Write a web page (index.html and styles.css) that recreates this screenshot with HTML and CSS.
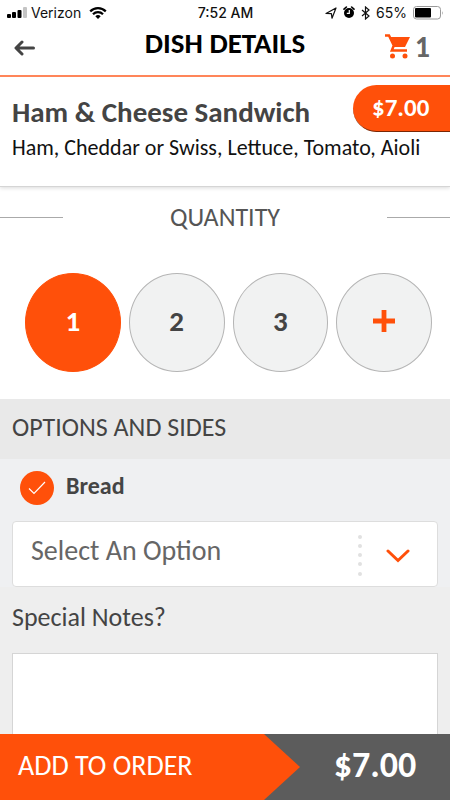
FILE: index.html
```html
<!DOCTYPE html>
<html lang="en">
<head>
<meta charset="utf-8">
<meta name="viewport" content="width=device-width, initial-scale=1">
<title>Dish Details</title>
<link rel="stylesheet" href="styles.css">
</head>
<body>
<div class="app">
  <div class="status">
    <div class="status-side">
      <svg width="20" height="12" viewBox="0 0 20 12"><rect x="0" y="7" width="4" height="4" rx="1"/><rect x="5" y="5" width="4" height="6" rx="1"/><rect x="10.500" y="3" width="4" height="8" rx="1"/><rect x="16" y="0" width="4" height="11" rx="1" fill="#c4c4c4"/></svg>
      <span>Verizon</span>
      <svg class="wifi" width="18" height="12" viewBox="0 0 18 12"><path d="M1.200 4.400a11 11 0 0 1 15.600 0M4 7.300a7 7 0 0 1 10 0" fill="none" stroke="#000" stroke-width="2.200"/><path d="M9 12L6.300 9.300a3.800 3.800 0 0 1 5.400 0z"/></svg>
    </div>
    <span class="clock">7:52 AM</span>
    <div class="status-side status-right">
      <svg width="12" height="12" viewBox="0 0 12 12"><path d="M1 6.500L11 1 7 11.200 6.400 6.700z" fill="none" stroke="#111" stroke-width="1.200" stroke-linejoin="round"/></svg>
      <svg width="12" height="13" viewBox="0 0 12 13"><circle cx="6" cy="7" r="5"/><path d="M1 3.200L3.400 1M11 3.200L8.600 1" stroke="#000" stroke-width="1.600" stroke-linecap="round"/><path d="M6.300 4v3.400H3.800" fill="none" stroke="#fff" stroke-width="1.200"/></svg>
      <svg width="9" height="14" viewBox="0 0 9 14"><path d="M1 4l7 6-3.500 3V1L8 4l-7 6" fill="none" stroke="#111" stroke-width="1.200"/></svg>
      <span>65%</span>
      <svg width="31" height="14" viewBox="0 0 31 14"><rect x=".5" y=".5" width="27" height="12.500" rx="3" fill="#fff" stroke="#999"/><rect x="2" y="2" width="16" height="9.500" rx="1"/><path d="M29.300 5v4q1.400-2 0-4z" fill="#888"/></svg>
    </div>
  </div>
  <header class="header">
    <button class="back" type="button" aria-label="Back"><svg width="21" height="16" viewBox="0 0 21 16"><path d="M8 2L2 8l6 6M2.500 8H19.500" fill="none" stroke="#444" stroke-width="3" stroke-linecap="round" stroke-linejoin="round"/></svg></button>
    <h1>DISH DETAILS</h1>
    <a class="cart" href="#" aria-label="Cart, 1 item"><svg width="26" height="26" viewBox="0 0 26 26"><path d="M0 1.500h4l4.800 10-2 5H22" fill="none" stroke="#ff500a" stroke-width="2.500"/><path d="M4.500 3H25L20 13H9z" fill="#ff500a"/><circle cx="7.500" cy="22" r="2.500" fill="#ff500a"/><circle cx="20" cy="22" r="2.500" fill="#ff500a"/></svg><span>1</span></a>
  </header>
  <main class="content">
    <section class="dish">
      <div class="dish-head"><h2>Ham &amp; Cheese Sandwich</h2><span class="price">$7.00</span></div>
      <p>Ham, Cheddar or Swiss, Lettuce, Tomato, Aioli</p>
    </section>
    <section class="quantity">
      <h2>QUANTITY</h2>
      <div class="amounts">
        <button class="amount selected" type="button">1</button>
        <button class="amount" type="button">2</button>
        <button class="amount" type="button">3</button>
        <button class="amount" type="button" aria-label="More"><svg width="22" height="22" viewBox="0 0 22 22"><path d="M11 0v22M0 11h22" stroke="#ff500a" stroke-width="4.800"/></svg></button>
      </div>
    </section>
    <h2 class="options-title">OPTIONS AND SIDES</h2>
    <section class="option">
      <label class="check-row"><span class="check"><input type="checkbox" checked><svg width="18" height="14" viewBox="0 0 18 14"><path d="M1 7.500L6 12.500 17 1" fill="none" stroke="#fff" stroke-width="1.200"/></svg></span><span class="check-text">Bread</span></label>
      <div class="select-wrap">
        <select aria-label="Bread option"><option>Select An Option</option></select>
        <svg class="dots" width="4" height="44" viewBox="0 0 4 44"><g fill="#e1e1e1"><circle cx="2" cy="4" r="2"/><circle cx="2" cy="13" r="2"/><circle cx="2" cy="22" r="2"/><circle cx="2" cy="31" r="2"/><circle cx="2" cy="41" r="2"/></g></svg>
        <svg class="chevron" width="24" height="14" viewBox="0 0 24 14"><path d="M2 2l10 9.500L22 2" fill="none" stroke="#ff500a" stroke-width="3" stroke-linecap="round"/></svg>
      </div>
    </section>
    <section class="notes">
      <label for="notes">Special Notes?</label>
      <textarea id="notes" rows="6"></textarea>
    </section>
  </main>
  <footer class="order">
    <button type="button">ADD TO ORDER</button>
    <strong>$7.00</strong>
  </footer>
</div>
</body>
</html>
```
FILE: styles.css
```css
* { box-sizing: border-box; }
body { margin: 0; font-family: Carlito, Lato, sans-serif; color: #444; background: #fff; }
button, select, textarea { font: inherit; color: inherit; border: 0; margin: 0; }
h1, h2, p { margin: 0; }
svg { display: block; flex: none; }
.app { height: 100vh; display: flex; flex-direction: column; }
.status { display: grid; grid-template-columns: 1fr auto 1fr; align-items: center; height: 25px; padding: 0 6px 0 7px; font: 14px/24px Inter, sans-serif; color: #111; }
.status-side { display: flex; align-items: center; gap: 4px; }
.status-right { justify-content: flex-end; gap: 6px; }
.wifi { margin-left: 4px; }
.clock { font-weight: 500; }
.header { display: grid; grid-template-columns: 1fr auto 1fr; align-items: center; height: 52px; padding: 0 20px 16px 20px; border-bottom: 2px solid #ff8559; flex: none; }
.header h1 { font-size: 29px; line-height: 32px; color: #000; }
.back { background: none; margin-left: -6px; padding: 10px 0 0; justify-self: start; }
.cart { display: flex; align-items: center; justify-self: end; gap: 4px; padding-top: 8px; color: #666; text-decoration: none; font-size: 30px; line-height: 28px; font-weight: 700; }
.content { flex: 1; min-height: 0; overflow-y: auto; scrollbar-width: none; background: #eee; }
.dish { position: relative; height: 110px; padding: 8px 0 0 12px; background: #fff; border-bottom: 1px solid #d5d5d5; box-shadow: 0 1px 4px rgba(0, 0, 0, .15); }
.dish-head { display: flex; justify-content: space-between; }
.dish h2 { font-size: 29px; line-height: 54px; }
.dish p { font-size: 22px; line-height: 24px; margin-top: -3px; color: #111; }
.price { width: 97px; height: 47px; padding-left: 19px; border-radius: 24px 0 0 24px; border-bottom: 1px solid #7a2604; background: #ff500a; color: #fff; font-size: 25px; line-height: 46px; font-weight: 700; }
.quantity { padding: 14px 0 27px; background: #fff; }
.quantity h2 { display: flex; justify-content: space-between; align-items: center; font-size: 26px; line-height: 32px; font-weight: 400; color: #555; }
.quantity h2::before, .quantity h2::after { content: ""; width: 63px; height: 1px; background: #aaa; }
.amounts { display: grid; grid-template-columns: repeat(4, 1fr); gap: 8px; padding: 40px 18px 0 25px; }
.amount { display: flex; align-items: center; justify-content: center; height: 99px; padding: 0 0 4px; border: 1px solid #b5b5b5; border-radius: 50%; background: #f1f2f2; font-size: 29px; font-weight: 700; }
.selected { background: #ff500a; border-color: #ff500a; color: #fff; }
.options-title { padding: 0 12px 4px; background: #e9e9e9; font-size: 26px; line-height: 56px; font-weight: 400; }
.option { padding: 11px 12px 0; background: #eff0f2; }
.check-row { display: flex; align-items: center; gap: 12px; height: 35px; padding-left: 8px; font-size: 24px; line-height: 30px; font-weight: 700; }
.check-text { padding-bottom: 4px; }
.check { display: grid; place-items: center; }
.check > * { grid-area: 1 / 1; }
.check input { appearance: none; width: 34px; height: 34px; margin: 0; border-radius: 50%; background: #ff500a; }
.check svg { z-index: 1; pointer-events: none; }
.select-wrap { position: relative; margin-top: 16px; }
select { appearance: none; width: 100%; height: 66px; padding: 0 96px 8px 18px; border: 1px solid #ddd; border-radius: 4px; background: #fff; color: #666; font-size: 28px; }
.dots, .chevron { position: absolute; pointer-events: none; }
.dots { right: 76px; top: 12px; }
.chevron { right: 28px; top: 28px; }
.notes { padding: 14px 12px 20px; }
.notes label { display: block; font-size: 26px; line-height: 32px; }
.notes textarea { display: block; width: 100%; height: 160px; margin-top: 20px; padding: 12px; border: 1px solid #d5d5d5; background: #fff; resize: none; }
.order { display: grid; grid-template-columns: 2fr 1fr; height: 66px; flex: none; background: #5c5c5c; color: #fff; }
.order button { padding: 0 18px 4px; text-align: left; background: #ff500a; font-size: 28px; clip-path: polygon(0 0, calc(100% - 36px) 0, 100% 50%, calc(100% - 36px) 100%, 0 100%); }
.order strong { text-align: center; font-size: 36px; line-height: 62px; font-weight: 700; }
```
